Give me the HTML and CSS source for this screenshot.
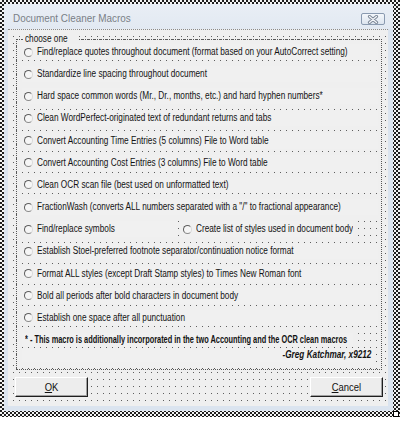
FILE: index.html
```html
<!DOCTYPE html>
<html>
<head>
<meta charset="utf-8">
<link rel="stylesheet" href="styles.css">
</head>
<body>
<div class="sel">
  <div class="win">
    <div class="titlebar">
      <span class="t title">Document Cleaner Macros</span>
      <span class="close"><svg width="12" height="9" viewBox="0 0 12 9"><path d="M2.5 1.5 L9.5 7.5 M9.5 1.5 L2.5 7.5" stroke="#7d8898" stroke-width="3.2" stroke-linecap="round" fill="none"/><path d="M2.5 1.5 L9.5 7.5 M9.5 1.5 L2.5 7.5" stroke="#f4f6f9" stroke-width="1.2" stroke-linecap="round" fill="none"/></svg></span>
    </div>
    <div class="client grid">
      <div class="frame grid">
        <div class="legend"><span class="t">choose one</span></div>
        <div class="opts">
          <div class="opt"><span class="radio"></span><span class="t">Find/replace quotes throughout document (format based on your AutoCorrect setting)</span></div>
          <div class="opt"><span class="radio"></span><span class="t">Standardize line spacing throughout document</span></div>
          <div class="opt"><span class="radio"></span><span class="t">Hard space common words (Mr., Dr., months, etc.) and hard hyphen numbers*</span></div>
          <div class="opt"><span class="radio"></span><span class="t">Clean WordPerfect-originated text of redundant returns and tabs</span></div>
          <div class="opt"><span class="radio"></span><span class="t">Convert Accounting Time Entries (5 columns) File to Word table</span></div>
          <div class="opt"><span class="radio"></span><span class="t">Convert Accounting Cost Entries (3 columns) File to Word table</span></div>
          <div class="opt"><span class="radio"></span><span class="t">Clean OCR scan file (best used on unformatted text)</span></div>
          <div class="opt"><span class="radio"></span><span class="t">FractionWash (converts ALL numbers separated with a "/" to fractional appearance)</span></div>
          <div class="split">
            <div class="opt half1"><span class="radio"></span><span class="t">Find/replace symbols</span></div>
            <div class="opt half2"><span class="radio"></span><span class="t">Create list of styles used in document body</span></div>
          </div>
          <div class="opt"><span class="radio"></span><span class="t">Establish Stoel-preferred footnote separator/continuation notice format</span></div>
          <div class="opt"><span class="radio"></span><span class="t">Format ALL styles (except Draft Stamp styles) to Times New Roman font</span></div>
          <div class="opt"><span class="radio"></span><span class="t">Bold all periods after bold characters in document body</span></div>
          <div class="opt"><span class="radio"></span><span class="t">Establish one space after all punctuation</span></div>
          <div class="notes">
            <div class="note"><span class="t b">* - This macro is additionally incorporated in the two Accounting and the OCR clean macros</span></div>
            <div class="sig"><span class="t bi">-Greg Katchmar, x9212</span></div>
          </div>
        </div>
      </div>
      <div class="buttons">
        <div class="btn"><span class="t tc"><u>O</u>K</span></div>
        <div class="btn"><span class="t tc"><u>C</u>ancel</span></div>
      </div>
    </div>
  </div>
  <span class="handle"></span>
</div>
</body>
</html>
```

FILE: styles.css
```css
html, body {
  margin: 0;
  padding: 0;
}

body {
  width: 400px;
  height: 424px;
  overflow: hidden;
  background: #ffffff;
  font-family: "Liberation Sans", Arial, sans-serif;
  font-size: 10px;
  color: #121212;
}

.sel {
  position: relative;
  width: 400px;
  height: 417px;
  box-sizing: border-box;
  padding: 4px 7px 6px 4px;
  background: repeating-conic-gradient(#1e1e1e 0 25%, #f4f4f4 0 50%) 0 0 / 4px 4px;
}

.win {
  height: 100%;
  background: #dbe4ef;
  display: flex;
  flex-direction: column;
}

.titlebar {
  height: 25px;
  flex: none;
  display: flex;
  justify-content: space-between;
  align-items: flex-start;
  padding: 0 8px 0 9px;
  box-sizing: border-box;
  background: linear-gradient(#e9eef5, #e2e9f2);
}

.t {
  display: inline-block;
  white-space: nowrap;
  transform: scaleX(0.824);
  transform-origin: 0 50%;
}

.tc {
  transform: scaleX(0.9);
  transform-origin: 50% 50%;
}

.title {
  font-size: 11px;
  color: #7a7f87;
  margin-top: 8px;
  line-height: 13px;
  transform: scaleX(0.9);
}

.close {
  margin-top: 9px;
  width: 24px;
  height: 12px;
  box-sizing: border-box;
  border: 1px solid #8a9ab0;
  border-radius: 2px;
  background: linear-gradient(#f4f7fb, #dde5ef);
  display: flex;
  align-items: center;
  justify-content: center;
}

.close svg {
  display: block;
}

.grid {
  background-color: #5e5e5e;
  background-image:
    linear-gradient(to right, #efefef 5px, transparent 5px),
    linear-gradient(to bottom, #efefef 6px, transparent 6px);
  background-size: 6px 7px;
}

.client {
  flex: 1;
  margin: 0 5px 5px 4px;
  border-top: 1px dotted #8a8a8a;
  display: flex;
  flex-direction: column;
}

.frame {
  margin: 9px 6px 0 8px;
  height: 331px;
  box-sizing: border-box;
  border: 1px dotted #555555;
  padding: 0 3px 0 5px;
}

.legend {
  width: max-content;
  height: 12px;
  line-height: 12px;
  margin: -7px 0 0 1px;
  padding: 0 2px;
  background: #efefef;
}

.opts {
  margin-top: -1px;
  display: flex;
  flex-direction: column;
  gap: 6.17px;
}

.opt {
  height: 16px;
  display: flex;
  align-items: center;
  padding-left: 2px;
  background: #f0f0f0;
  line-height: 16px;
  overflow: hidden;
}

.radio {
  flex: none;
  width: 9px;
  height: 9px;
  box-sizing: border-box;
  border-radius: 50%;
  border: 1px solid;
  border-color: #5e5e5e #d8d8d8 #8a8a8a #5e5e5e;
  background: #f6f6f6;
  margin-right: 4px;
}

.split {
  display: flex;
  gap: 2px;
}

.half1 {
  width: 156px;
  box-sizing: border-box;
}

.half2 {
  width: 173px;
  box-sizing: border-box;
  padding-left: 3px;
}

.notes {
  margin-top: 1px;
}

.note {
  width: 331px;
  height: 14px;
  line-height: 14px;
  padding-left: 3px;
  box-sizing: border-box;
  background: #f0f0f0;
  overflow: hidden;
}

.sig {
  width: 352px;
  height: 14px;
  line-height: 14px;
  margin-top: 1px;
  padding-right: 3px;
  box-sizing: border-box;
  text-align: right;
  background: #f0f0f0;
}

.sig .t {
  transform: scaleX(0.82);
  transform-origin: 100% 50%;
}

.b {
  font-weight: bold;
  transform: scaleX(0.738);
}

.bi {
  font-weight: bold;
  font-style: italic;
}

.buttons {
  display: flex;
  justify-content: space-between;
  margin: 7px 5px 0 7px;
}

.btn {
  width: 73px;
  height: 20px;
  box-sizing: border-box;
  border: 1px solid;
  border-color: #ffffff #1e1e1e #1e1e1e #ffffff;
  box-shadow: inset -1px -1px 0 #a0a0a0;
  background: #ededed;
  display: flex;
  align-items: center;
  justify-content: center;
  font-size: 10.5px;
}

.handle {
  position: absolute;
  right: 1px;
  bottom: 0;
  width: 6px;
  height: 6px;
  box-sizing: border-box;
  border: 1px solid #000;
  background: #fff;
}
```
